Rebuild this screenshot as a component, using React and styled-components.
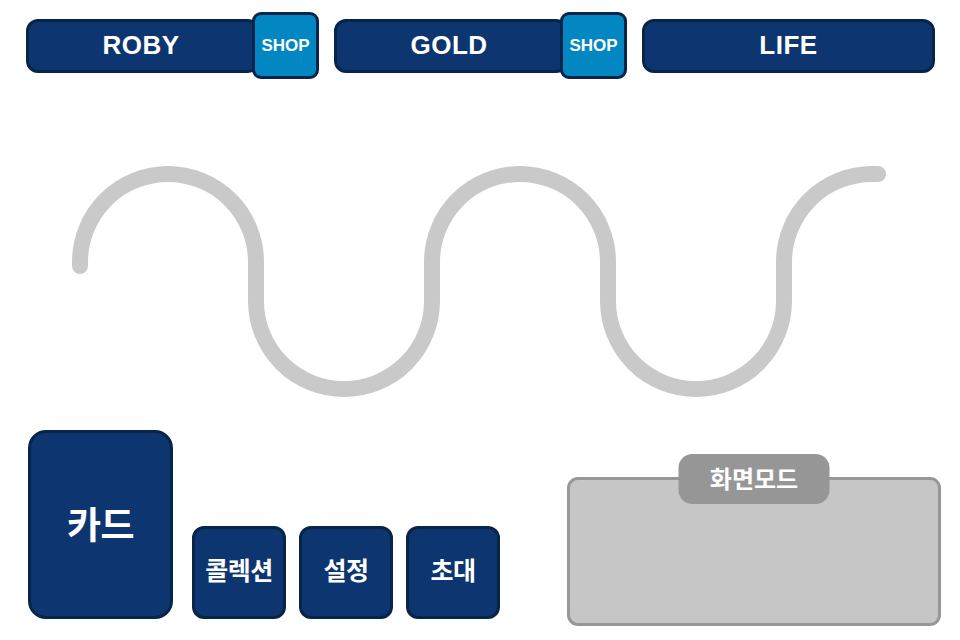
import styled, { createGlobalStyle } from "styled-components";

const GlobalStyle = createGlobalStyle`
  body {
    margin: 0;
    background: #ffffff;
    font-family: "Noto Sans CJK KR", "Noto Sans", sans-serif;
  }
`;

const Page = styled.div`
  width: 960px;
  height: 640px;
  overflow: hidden;
  display: flex;
  flex-direction: column;
`;

const TopBar = styled.div`
  display: flex;
  gap: 15px;
  padding: 12px 25px 0 26px;
  height: 67px;
`;

const StatGroup = styled.div`
  flex: 1;
  display: flex;
  align-items: center;
`;

const Stat = styled.div`
  flex: 1;
  height: 54px;
  box-sizing: border-box;
  background: #0d3670;
  border: 3px solid #082449;
  border-radius: 12px;
  display: flex;
  align-items: center;
  justify-content: center;
  color: #fff;
  font-family: "Liberation Sans", Arial, sans-serif;
  font-weight: 700;
  font-size: 26px;
  letter-spacing: 0.5px;
  margin-right: ${(p) => (p.$shop ? "-8px" : "0")};
  padding-right: ${(p) => (p.$shop ? "4px" : "0")};
`;

const ShopButton = styled.div`
  position: relative;
  z-index: 1;
  width: 67px;
  height: 67px;
  box-sizing: border-box;
  background: #0387c2;
  border: 3px solid #082449;
  border-radius: 9px;
  display: flex;
  align-items: center;
  justify-content: center;
  color: #fff;
  font-family: "Liberation Sans", Arial, sans-serif;
  font-weight: 700;
  font-size: 17px;
`;

const WaveArea = styled.svg`
  display: block;
  flex: none;
`;

const BottomRow = styled.div`
  display: flex;
  align-items: flex-start;
  padding: 0 19px 0 28px;
`;

const MenuGroup = styled.div`
  display: flex;
  align-items: flex-end;
  gap: 13px;
`;

const MenuButton = styled.div`
  box-sizing: border-box;
  width: ${(p) => (p.$big ? "145px" : "94px")};
  height: ${(p) => (p.$big ? "189px" : "93px")};
  margin-right: ${(p) => (p.$big ? "6px" : "0")};
  padding-bottom: ${(p) => (p.$big ? "4px" : "7px")};
  background: #0d3670;
  border: 3px solid #082449;
  border-radius: ${(p) => (p.$big ? "18px" : "12px")};
  display: flex;
  align-items: center;
  justify-content: center;
  color: #fff;
  font-weight: 700;
  font-size: ${(p) => (p.$big ? "37px" : "25px")};
  letter-spacing: -0.5px;
`;

const ModePanel = styled.div`
  position: relative;
  margin-left: auto;
  margin-top: 47px;
  width: 374px;
  height: 149px;
  box-sizing: border-box;
  background: #c6c6c6;
  border: 3px solid #979797;
  border-radius: 11px;
`;

const ModeLabel = styled.div`
  position: absolute;
  top: -26px;
  left: 50%;
  transform: translateX(-50%);
  width: 151px;
  height: 50px;
  padding-bottom: 3px;
  box-sizing: border-box;
  background: #969696;
  border-radius: 14px;
  display: flex;
  align-items: center;
  justify-content: center;
  color: #fff;
  font-weight: 700;
  font-size: 24px;
`;

const wavePath =
  "M80 266 L80 262 A88 88 0 0 1 256 262 L256 301 A88 88 0 0 0 432 301 " +
  "L432 262 A88 88 0 0 1 608 262 L608 301 A88 88 0 0 0 784 301 " +
  "L784 262 A88 88 0 0 1 872 174 L878 174";

export default function App() {
  return (
    <Page>
      <GlobalStyle />
      <TopBar>
        <StatGroup>
          <Stat $shop>ROBY</Stat>
          <ShopButton>SHOP</ShopButton>
        </StatGroup>
        <StatGroup>
          <Stat $shop>GOLD</Stat>
          <ShopButton>SHOP</ShopButton>
        </StatGroup>
        <StatGroup>
          <Stat>LIFE</Stat>
        </StatGroup>
      </TopBar>

      <WaveArea width="960" height="351" viewBox="0 79 960 351">
        <path
          d={wavePath}
          fill="none"
          stroke="#c9c9c9"
          strokeWidth="16"
          strokeLinecap="round"
        />
      </WaveArea>

      <BottomRow>
        <MenuGroup>
          <MenuButton $big>카드</MenuButton>
          <MenuButton>콜렉션</MenuButton>
          <MenuButton>설정</MenuButton>
          <MenuButton>초대</MenuButton>
        </MenuGroup>
        <ModePanel>
          <ModeLabel>화면모드</ModeLabel>
        </ModePanel>
      </BottomRow>
    </Page>
  );
}
